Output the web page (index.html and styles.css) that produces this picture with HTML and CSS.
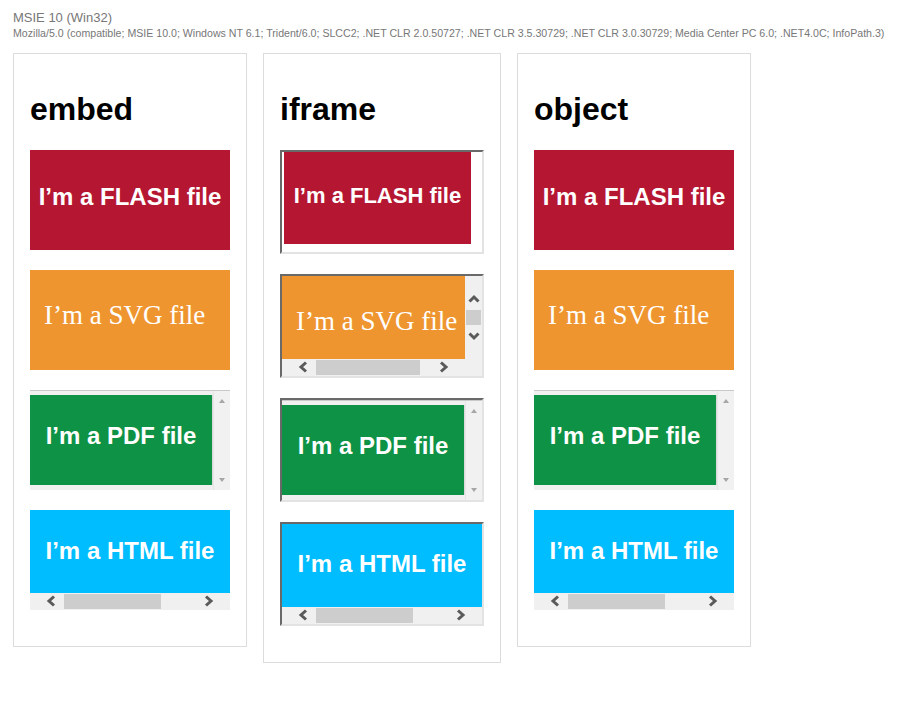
FILE: index.html
```html
<!DOCTYPE html>
<html lang="en">
<head>
<meta charset="utf-8">
<title>MSIE 10 (Win32)</title>
<link rel="stylesheet" href="styles.css">
</head>
<body>
<header class="ua">
  <div class="ua-title">MSIE 10 (Win32)</div>
  <div class="ua-string">Mozilla/5.0 (compatible; MSIE 10.0; Windows NT 6.1; Trident/6.0; SLCC2; .NET CLR 2.0.50727; .NET CLR 3.5.30729; .NET CLR 3.0.30729; Media Center PC 6.0; .NET4.0C; InfoPath.3)</div>
</header>

<main class="panels">
  <!-- embed -->
  <section class="panel">
    <h1>embed</h1>
    <div class="item flash"><span>I’m a FLASH file</span></div>
    <div class="item svgbox">I’m a SVG file</div>
    <div class="item pdfview">
      <div class="pdfarea"><div class="pdfpage">I’m a PDF file</div></div>
      <div class="pdfscroll"><span class="tri-up"></span><span class="tri-down"></span></div>
    </div>
    <div class="item htmlview">
      <div class="htmlpage">I’m a HTML file</div>
      <div class="hscroll">
        <svg class="chev" width="10" height="12" viewBox="0 0 10 12"><polyline points="8,1.5 3,6 8,10.5"/></svg>
        <div class="hthumb"></div>
        <svg class="chev chev-r" width="10" height="12" viewBox="0 0 10 12"><polyline points="2,1.5 7,6 2,10.5"/></svg>
      </div>
    </div>
  </section>

  <!-- iframe -->
  <section class="panel">
    <h1>iframe</h1>
    <div class="item frame frame-flash">
      <div class="flash-mini">I’m a FLASH file</div>
    </div>
    <div class="item frame frame-svg">
      <div class="svgview">I’m a SVG file</div>
      <div class="vscroll">
        <svg class="vchev" width="12" height="9" viewBox="0 0 12 9"><polyline points="1.5,7.5 6,3 10.5,7.5"/></svg>
        <div class="vthumb"></div>
        <svg class="vchev vchev-d" width="12" height="9" viewBox="0 0 12 9"><polyline points="1.5,1.5 6,6 10.5,1.5"/></svg>
      </div>
      <div class="hscroll hscroll-short">
        <svg class="chev" width="10" height="12" viewBox="0 0 10 12"><polyline points="8,1.5 3,6 8,10.5"/></svg>
        <div class="hthumb hthumb-wide"></div>
        <svg class="chev chev-r" width="10" height="12" viewBox="0 0 10 12"><polyline points="2,1.5 7,6 2,10.5"/></svg>
      </div>
      <div class="corner"></div>
    </div>
    <div class="item frame">
      <div class="pdfview">
        <div class="pdfarea"><div class="pdfpage">I’m a PDF file</div></div>
        <div class="pdfscroll"><span class="tri-up"></span><span class="tri-down"></span></div>
      </div>
    </div>
    <div class="item frame">
      <div class="htmlview">
        <div class="htmlpage htmlpage-frame">I’m a HTML file</div>
        <div class="hscroll">
          <svg class="chev" width="10" height="12" viewBox="0 0 10 12"><polyline points="8,1.5 3,6 8,10.5"/></svg>
          <div class="hthumb"></div>
          <svg class="chev chev-r" width="10" height="12" viewBox="0 0 10 12"><polyline points="2,1.5 7,6 2,10.5"/></svg>
        </div>
      </div>
    </div>
  </section>

  <!-- object -->
  <section class="panel">
    <h1>object</h1>
    <div class="item flash"><span>I’m a FLASH file</span></div>
    <div class="item svgbox">I’m a SVG file</div>
    <div class="item pdfview">
      <div class="pdfarea"><div class="pdfpage">I’m a PDF file</div></div>
      <div class="pdfscroll"><span class="tri-up"></span><span class="tri-down"></span></div>
    </div>
    <div class="item htmlview">
      <div class="htmlpage">I’m a HTML file</div>
      <div class="hscroll">
        <svg class="chev" width="10" height="12" viewBox="0 0 10 12"><polyline points="8,1.5 3,6 8,10.5"/></svg>
        <div class="hthumb"></div>
        <svg class="chev chev-r" width="10" height="12" viewBox="0 0 10 12"><polyline points="2,1.5 7,6 2,10.5"/></svg>
      </div>
    </div>
  </section>
</main>
</body>
</html>
```

FILE: styles.css
```css
* { box-sizing: border-box; }

body {
  margin: 0;
  padding: 10px 13px 0;
  background: #fff;
  font-family: "Liberation Sans", Arial, sans-serif;
  color: #000;
}

.ua { margin-bottom: 13px; }

.ua-title {
  font-size: 13px;
  line-height: 16px;
  color: #777;
}

.ua-string {
  font-size: 10.62px;
  line-height: 14px;
  color: #777;
  white-space: nowrap;
}

.panels {
  display: flex;
  align-items: flex-start;
  gap: 16px;
}

.panel {
  border: 1px solid #dcdcdc;
  padding: 16px 16px 16px;
}

.panel h1 {
  margin: 21.44px 0;
  font-size: 32px;
  font-weight: bold;
  line-height: normal;
}

.item {
  margin-bottom: 20px;
}

/* Flash */
.flash {
  width: 200px;
  height: 100px;
  background: #b51632;
  color: #fff;
  font-weight: bold;
  font-size: 24px;
  line-height: 24px;
  text-align: center;
  padding-top: 35px;
}

/* SVG */
.svgbox {
  width: 200px;
  height: 100px;
  background: #ee9530;
  color: #fff;
  font-family: "Liberation Serif", "Times New Roman", serif;
  font-size: 27px;
  line-height: 27px;
  padding: 32px 0 0 14px;
  white-space: nowrap;
}

/* PDF viewer */
.pdfview {
  width: 200px;
  height: 100px;
  display: flex;
  background: #f0f0f0;
  border-top: 1px solid #c9c9c9;
}

.pdfarea {
  width: 183px;
  padding-top: 4px;
}

.pdfpage {
  width: 183px;
  height: 90px;
  background: #0e9245;
  border-right: 1px solid #dadada;
  color: #fff;
  font-weight: bold;
  font-size: 24px;
  line-height: 24px;
  text-align: center;
  padding-top: 29px;
}

.pdfscroll {
  width: 17px;
  border-left: 1px solid #e6e6e6;
  background: #f1f1f1;
  display: flex;
  flex-direction: column;
  align-items: center;
  justify-content: space-between;
  padding: 8px 0 8px;
}

.tri-up, .tri-down {
  width: 0;
  height: 0;
  border-left: 3.5px solid transparent;
  border-right: 3.5px solid transparent;
}
.tri-up { border-bottom: 4px solid #a6a6a6; }
.tri-down { border-top: 4px solid #a6a6a6; }

/* HTML view */
.htmlview {
  width: 200px;
  height: 100px;
}

.htmlpage {
  height: 83px;
  background: #00bdff;
  color: #fff;
  font-weight: bold;
  font-size: 24px;
  line-height: 24px;
  text-align: center;
  padding-top: 29px;
}

.htmlpage-frame { padding-top: 28px; }

/* Scrollbars */
.hscroll {
  height: 17px;
  background: #f0f0f0;
  display: flex;
  align-items: center;
}

.chev {
  flex: none;
  margin-left: 16px;
}
.chev polyline, .vchev polyline {
  fill: none;
  stroke: #5a5a5a;
  stroke-width: 3;
}
.chev-r {
  margin-left: auto;
  margin-right: 16px;
}

.hthumb {
  width: 97px;
  height: 15px;
  background: #cdcdcd;
  margin-left: 8px;
}
.hthumb-wide { width: 104px; }

/* iframe frames */
.frame {
  width: 204px;
  height: 104px;
  border: 2px solid;
  border-color: #696969 #e3e3e3 #e3e3e3 #696969;
  background: #fff;
}

.flash-mini {
  width: 187px;
  height: 92px;
  margin-left: 2px;
  background: #b51632;
  color: #fff;
  font-weight: bold;
  font-size: 22px;
  line-height: 22px;
  text-align: center;
  padding-top: 33px;
  white-space: nowrap;
}

.frame-svg {
  display: grid;
  grid-template-columns: 183px 17px;
  grid-template-rows: 83px 17px;
  background: #f0f0f0;
}

.svgview {
  background: #ee9530;
  color: #fff;
  font-family: "Liberation Serif", "Times New Roman", serif;
  font-size: 27px;
  line-height: 27px;
  padding: 32px 0 0 14px;
  white-space: nowrap;
  overflow: hidden;
}

.vscroll {
  background: #f0f0f0;
  display: flex;
  flex-direction: column;
  align-items: center;
}

.vchev { flex: none; margin-top: 18px; }
.vchev-d { margin-top: 7px; }

.vthumb {
  width: 15px;
  height: 15px;
  background: #cdcdcd;
  margin-top: 7px;
}

.hscroll-short { width: 183px; }

.corner { background: #f0f0f0; }
```
